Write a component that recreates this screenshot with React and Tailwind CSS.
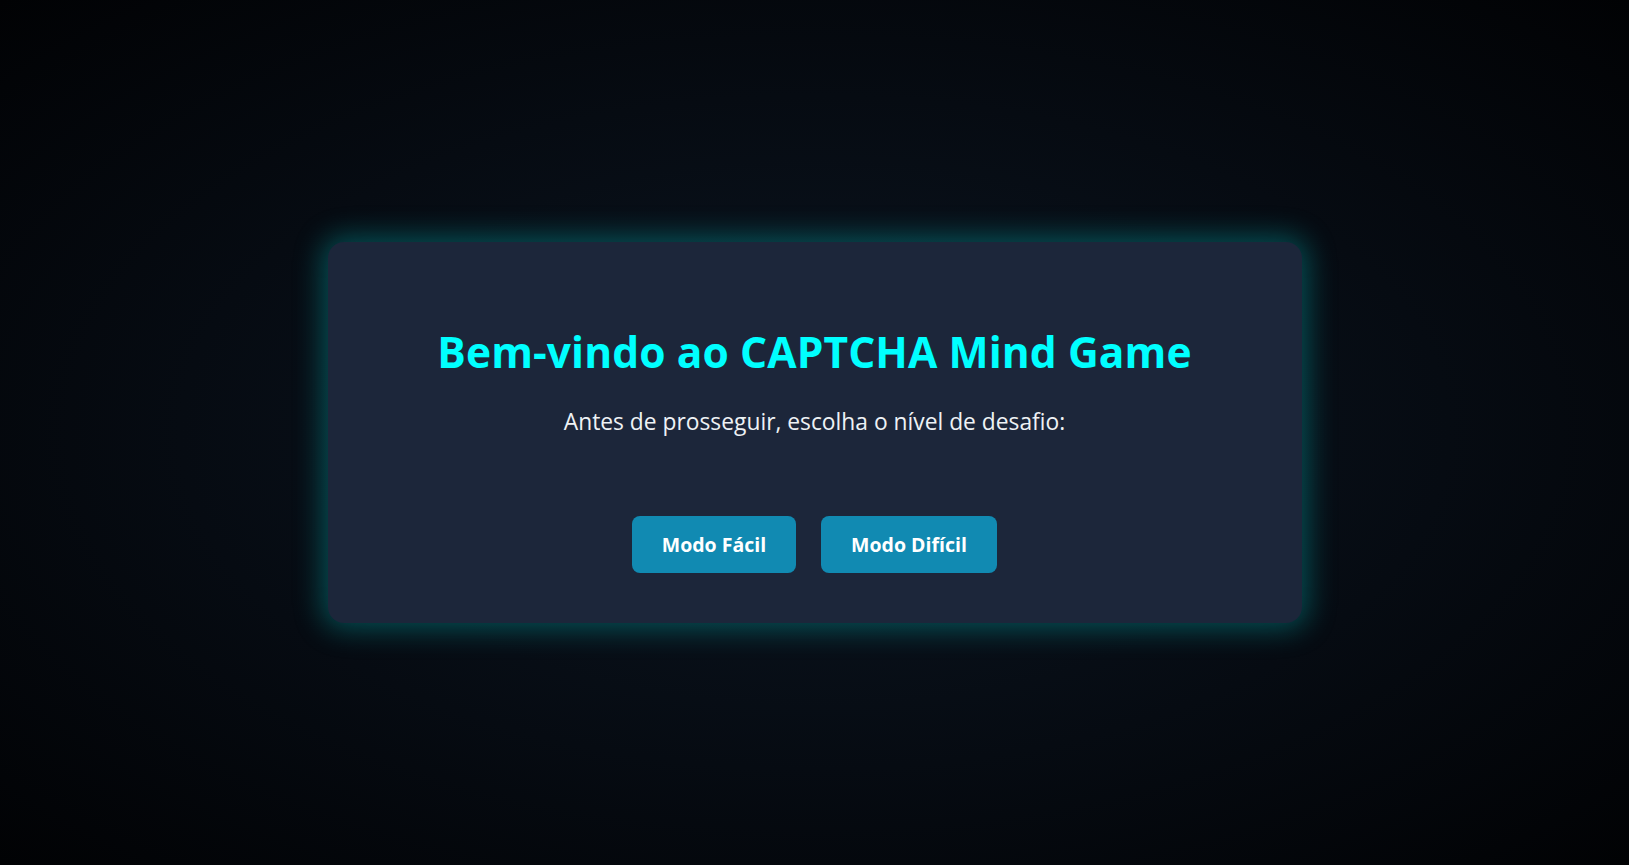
import React from 'react';

/**
 * CAPTCHA Mind Game — tela inicial de escolha de modo
 */
export default function App() {
  return (
    <main
      className="min-h-screen w-full flex items-center justify-center bg-[radial-gradient(ellipse_at_center,#0c1622_0%,#060b12_55%,#010204_100%)]"
      style={{ fontFamily: '"Open Sans", "Noto Sans", sans-serif' }}
    >
      <div className="w-[974px] h-[381px] bg-[#1c263a] rounded-2xl shadow-[0_0_28px_6px_rgba(0,200,200,0.35)] flex flex-col items-center pt-[84px] pb-[50px]">
        <h1 className="text-[42.5px] leading-[1.2] font-bold text-[#00ffff] tracking-[0.1px]">
          Bem-vindo ao CAPTCHA Mind Game
        </h1>
        <p className="mt-[28px] text-[22.8px] leading-[1.5] text-[#eef2f5]">
          Antes de prosseguir, escolha o nível de desafio:
        </p>
        <div className="mt-[77px] flex gap-[25px]">
          <button className="h-[57px] w-[164px] rounded-lg bg-[#118ab2] text-white text-[19.5px] font-bold">
            Modo Fácil
          </button>
          <button className="h-[57px] w-[176px] rounded-lg bg-[#118ab2] text-white text-[19.5px] font-bold">
            Modo Difícil
          </button>
        </div>
      </div>
    </main>
  );
}
